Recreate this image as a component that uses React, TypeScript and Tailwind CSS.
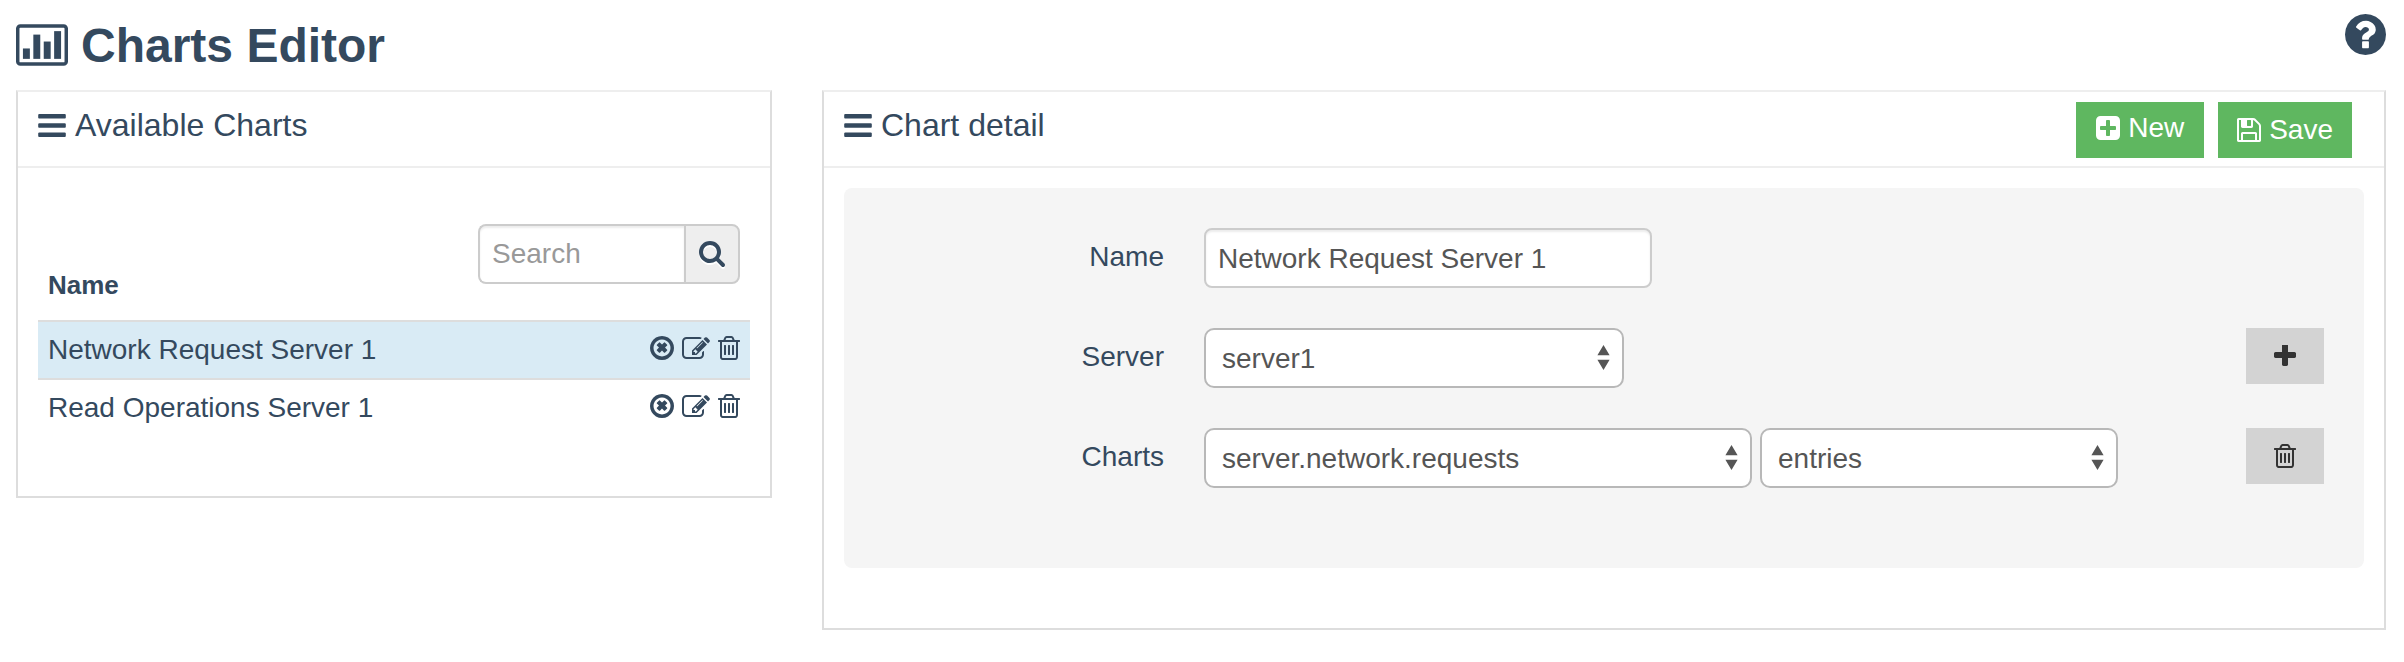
import React, { useId, useState } from "react";

type GlyphProps = { viewBox: string; d: string; className: string };

function Glyph({ viewBox, d, className }: GlyphProps) {
  return (
    <svg viewBox={viewBox} className={className} fill="currentColor" aria-hidden="true">
      <path d={d} />
    </svg>
  );
}

const SQUARE = "128 128 1536 1536";
const DISC =
  "q0 209-103 385.5t-279.5 279.5-385.5 103-385.5-103-279.5-279.5-103-385.5 103-385.5 279.5-279.5 385.5-103 385.5 103 279.5 279.5 103 385.5z";

const paths = {
  remove:
    "M1225 1051l-146 146q-10 10-23 10t-23-10l-137-137-137 137q-10 10-23 10t-23-10l-146-146q-10-10-10-23t10-23l137-137-137-137q-10-10-10-23t10-23l146-146q10-10 23-10t23 10l137 137 137-137q10-10 23-10t23 10l146 146q10 10 10 23t-10 23l-137 137 137 137q10 10 10 23t-10 23zm215-155q0-148-73-273t-198-198-273-73-273 73-198 198-73 273 73 273 198 198 273 73 273-73 198-198 73-273zm224 0" +
    DISC,
  edit: "M888 1184l116-116-152-152-116 116v56h96v96h56zm440-720q-16-16-33 1l-350 350q-17 17-1 33t33-1l350-350q17-17 1-33zm80 594v190q0 119-84.5 203.5t-203.5 84.5h-832q-119 0-203.5-84.5t-84.5-203.5v-832q0-119 84.5-203.5t203.5-84.5h832q63 0 117 25 15 7 18 23 3 17-9 29l-49 49q-14 14-32 8-23-6-45-6h-832q-66 0-113 47t-47 113v832q0 66 47 113t113 47h832q66 0 113-47t47-113v-126q0-13 9-22l64-64q15-15 35-7t20 29zm-96-738l288 288-672 672h-288v-288zm444 132l-92 92-288-288 92-92q28-28 68-28t68 28l152 152q28 28 28 68t-28 68z",
  trash:
    "M704 736v576q0 14-9 23t-23 9h-64q-14 0-23-9t-9-23v-576q0-14 9-23t23-9h64q14 0 23 9t9 23zm256 0v576q0 14-9 23t-23 9h-64q-14 0-23-9t-9-23v-576q0-14 9-23t23-9h64q14 0 23 9t9 23zm256 0v576q0 14-9 23t-23 9h-64q-14 0-23-9t-9-23v-576q0-14 9-23t23-9h64q14 0 23 9t9 23zm128 724v-948h-896v948q0 22 7 40.5t14.5 27 10.5 8.5h832q3 0 10.5-8.5t14.5-27 7-40.5zm-672-1076h448l-48-117q-7-9-17-11h-317q-10 2-17 11zm928 32v64q0 14-9 23t-23 9h-96v948q0 83-47 143.5t-113 60.5h-832q-66 0-113-58.5t-47-141.5v-952h-96q-14 0-23-9t-9-23v-64q0-14 9-23t23-9h309l70-167q15-37 54-63t79-26h320q40 0 79 26t54 63l70 167h309q14 0 23 9t9 23z",
  search:
    "M1216 832q0-185-131.5-316.5t-316.5-131.5-316.5 131.5-131.5 316.5 131.5 316.5 316.5 131.5 316.5-131.5 131.5-316.5zm512 832q0 52-38 90t-90 38q-54 0-90-38l-343-342q-179 124-399 124-143 0-273.5-55.5t-225-150-150-225-55.5-273.5 55.5-273.5 150-225 225-150 273.5-55.5 273.5 55.5 225 150 150 225 55.5 273.5q0 220-124 399l343 343q37 37 37 90z",
  help:
    "M1024 1376v-192q0-14-9-23t-23-9h-192q-14 0-23 9t-9 23v192q0 14 9 23t23 9h192q14 0 23-9t9-23zm256-672q0-88-55.5-163t-138.5-116-170-41q-243 0-371 213-15 24 8 42l132 100q7 6 19 6 16 0 25-12 53-68 86-92 34-24 86-24 48 0 85.5 26t37.5 59q0 38-20 61t-68 45q-63 28-115.5 86.5t-52.5 125.5v36q0 14 9 23t23 9h192q14 0 23-9t9-23q0-19 21.5-49.5t54.5-49.5q32-18 49-28.5t46-35 44.5-48 28-60.5 12.5-81zm384 192" +
    DISC,
  save: "M512 1536h768v-384h-768v384zm896 0h128v-896q0-14-10-38.5t-20-34.5l-281-281q-10-10-34-20t-39-10v416q0 40-28 68t-68 28h-576q-40 0-68-28t-28-68v-416h-128v1280h128v-416q0-40 28-68t68-28h832q40 0 68 28t28 68v416zm-384-928v-320q0-13-9.5-22.5t-22.5-9.5h-192q-13 0-22.5 9.5t-9.5 22.5v320q0 13 9.5 22.5t22.5 9.5h192q13 0 22.5-9.5t9.5-22.5zm640 32v928q0 40-28 68t-68 28h-1344q-40 0-68-28t-28-68v-1344q0-40 28-68t68-28h928q40 0 88 20t76 48l280 280q28 28 48 76t20 88z",
  plusSquare:
    "M1408 960v-128q0-26-19-45t-45-19h-320v-320q0-26-19-45t-45-19h-128q-26 0-45 19t-19 45v320h-320q-26 0-45 19t-19 45v128q0 26 19 45t45 19h320v320q0 26 19 45t45 19h128q26 0 45-19t19-45v-320h320q26 0 45-19t19-45zm256-544v960q0 119-84.5 203.5t-203.5 84.5h-960q-119 0-203.5-84.5t-84.5-203.5v-960q0-119 84.5-203.5t203.5-84.5h960q119 0 203.5 84.5t84.5 203.5z",
  plus: "M1600 736v192q0 40-28 68t-68 28h-416v416q0 40-28 68t-68 28h-192q-40 0-68-28t-28-68v-416h-416q-40 0-68-28t-28-68v-192q0-40 28-68t68-28h416v-416q0-40 28-68t68-28h192q40 0 68 28t28 68v416h416q40 0 68 28t28 68z",
  bars: "M1664 1344v128q0 26-19 45t-45 19h-1408q-26 0-45-19t-19-45v-128q0-26 19-45t45-19h1408q26 0 45 19t19 45zm0-512v128q0 26-19 45t-45 19h-1408q-26 0-45-19t-19-45v-128q0-26 19-45t45-19h1408q26 0 45 19t19 45zm0-512v128q0 26-19 45t-45 19h-1408q-26 0-45-19t-19-45v-128q0-26 19-45t45-19h1408q26 0 45 19t19 45z",
};

function ChartIcon() {
  return (
    <svg viewBox="0 0 1920 1536" className="h-[42px] w-[52px] shrink-0" fill="currentColor" aria-hidden="true">
      <rect x="64" y="64" width="1792" height="1408" rx="96" fill="none" stroke="currentColor" strokeWidth="128" />
      <rect x="256" y="896" width="256" height="384" />
      <rect x="640" y="384" width="256" height="896" />
      <rect x="1024" y="640" width="256" height="640" />
      <rect x="1408" y="256" width="256" height="1024" />
    </svg>
  );
}

function TrashIcon() {
  return <Glyph viewBox="192 128 1408 1536" d={paths.trash} className="h-6 w-[22px]" />;
}

function Panel({ title, actions, children }: { title: string; actions?: React.ReactNode; children: React.ReactNode }) {
  return (
    <section className="min-w-0 border-2 border-[#dddddd] border-t-[#eeeeee] bg-white">
      <header className="flex items-start justify-between border-b-2 border-[#eeeeee] pr-8 pb-2 pl-5">
        <h2 className="flex items-center gap-[9px] text-[32px] leading-[66px]">
          <Glyph viewBox="128 256 1536 1280" d={paths.bars} className="h-[23px] w-7" />
          {title}
        </h2>
        {actions}
      </header>
      {children}
    </section>
  );
}

function ChartTable() {
  const charts = ["Network Request Server 1", "Read Operations Server 1"];
  const [selected, setSelected] = useState(charts[0]);
  return (
    <table className="w-full border-separate border-spacing-0 text-left">
      <thead>
        <tr>
          <th scope="col" className="pb-4 pl-2.5 align-bottom text-[26px] leading-[37px] font-bold">
            Name
          </th>
          <th className="pr-2.5 pb-9 font-normal">
            <div className="flex justify-end">
              <input
                type="search"
                aria-label="Search"
                placeholder="Search"
                className="h-[60px] w-[206px] appearance-none rounded-l-lg border-2 border-r-0 border-[#cccccc] bg-white px-3 text-[28px] text-[#555555] shadow-[inset_0_2px_2px_rgba(0,0,0,0.075)] placeholder:text-[#999999]"
              />
              <button
                type="button"
                aria-label="Run search"
                className="flex h-[60px] w-14 items-center justify-center rounded-r-lg border-2 border-[#cccccc] bg-[#eeeeee]"
              >
                <Glyph
                  viewBox="64 128 1664 1664"
                  d={paths.search}
                  className="size-[26px] drop-shadow-[0_2px_0_#ffffff]"
                />
              </button>
            </div>
          </th>
        </tr>
      </thead>
      <tbody>
        {charts.map((name) => (
          <tr
            key={name}
            onClick={() => setSelected(name)}
            className={name === selected ? "bg-[#d9ebf5]" : "bg-white"}
          >
            <td className="border-t-2 border-[#dddddd] pt-2 pb-2 pl-2.5 text-[28px] leading-10">{name}</td>
            <td className="border-t-2 border-[#dddddd] pt-1.5 pr-2.5 pb-2.5">
              <div className="flex h-10 items-center justify-end gap-2">
                <button type="button" aria-label={`Close ${name}`}>
                  <Glyph viewBox={SQUARE} d={paths.remove} className="size-6" />
                </button>
                <button type="button" aria-label={`Edit ${name}`} className="h-6">
                  <Glyph viewBox="0 128 1792 1408" d={paths.edit} className="h-[22px] w-7" />
                </button>
                <button type="button" aria-label={`Delete ${name}`}>
                  <TrashIcon />
                </button>
              </div>
            </td>
          </tr>
        ))}
      </tbody>
    </table>
  );
}

function Select({ id, label, options, className }: { id?: string; label?: string; options: string[]; className: string }) {
  return (
    <div className={`relative ${className}`}>
      <select
        id={id}
        aria-label={label}
        className="h-[60px] w-full appearance-none rounded-[10px] border-2 border-[#b8b8b8] bg-white pt-0.5 pr-10 pl-4 text-[28px] text-[#555555]"
      >
        {options.map((option) => (
          <option key={option}>{option}</option>
        ))}
      </select>
      <svg
        viewBox="0 0 13 25"
        className="pointer-events-none absolute top-[17px] right-3.5 h-[25px] w-[13px] fill-[#555555]"
        aria-hidden="true"
      >
        <path d="M6.500 0L12.600 10.300H.400zM6.500 25L.400 14.800H12.600z" />
      </svg>
    </div>
  );
}

function FormRow({ id, label, children, action }: { id: string; label: string; children: React.ReactNode; action?: React.ReactNode }) {
  return (
    <div className="grid grid-cols-[320fr_1002fr_78px] gap-10">
      <label htmlFor={id} className="text-right text-[28px] leading-[58px]">
        {label}
      </label>
      <div className="flex gap-2">{children}</div>
      {action}
    </div>
  );
}

const greyButton = "flex h-14 items-center justify-center bg-[#d3d3d3] text-[#333333]";

export default function App() {
  const id = useId();
  return (
    <main
      className="min-h-screen bg-white pr-[18px] pb-8 pl-4 text-[#34495e]"
      style={{ fontFamily: '"Liberation Sans", Helvetica, Arial, sans-serif' }}
    >
      <header className="flex items-start justify-between py-2.5">
        <h1 className="flex gap-[13px] text-[48px] leading-[70px] font-bold">
          <span className="pt-3.5">
            <ChartIcon />
          </span>
          <span className="-mb-0.5 leading-[72px]">Charts Editor</span>
        </h1>
        <button type="button" aria-label="Help" className="mt-1">
          <Glyph viewBox={SQUARE} d={paths.help} className="size-[41px]" />
        </button>
      </header>

      <div className="grid grid-cols-[756fr_1564fr] items-start gap-[50px]">
        <Panel title="Available Charts">
          <div className="px-5 pt-14 pb-[60px]">
            <ChartTable />
          </div>
        </Panel>

        <Panel
          title="Chart detail"
          actions={
            <div className="mt-2.5 flex gap-3.5 text-[28px] text-white">
              <button type="button" className="flex h-14 items-center gap-2 bg-[#5fb760] px-5 pb-1">
                <Glyph viewBox={SQUARE} d={paths.plusSquare} className="size-6" />
                New
              </button>
              <button type="button" className="flex h-14 items-center gap-2 bg-[#5fb760] px-[19px]">
                <Glyph viewBox={SQUARE} d={paths.save} className="size-6" />
                Save
              </button>
            </div>
          }
        >
          <div className="px-5 pt-5 pb-[60px]">
            <form
              className="flex flex-col gap-10 rounded-lg bg-[#f5f5f5] pt-10 pr-10 pb-20"
              onSubmit={(event) => event.preventDefault()}
            >
              <FormRow id={`${id}-name`} label="Name">
                <input
                  id={`${id}-name`}
                  type="text"
                  defaultValue="Network Request Server 1"
                  className="h-[60px] w-[448px] max-w-full rounded-lg border-2 border-[#cccccc] bg-white px-3 pt-0.5 text-[28px] text-[#555555] shadow-[inset_0_2px_2px_rgba(0,0,0,0.075)]"
                />
              </FormRow>
              <FormRow
                id={`${id}-server`}
                label="Server"
                action={
                  <button type="button" aria-label="Add chart" className={greyButton}>
                    <Glyph viewBox="192 192 1408 1408" d={paths.plus} className="size-[22px]" />
                  </button>
                }
              >
                <Select id={`${id}-server`} options={["server1"]} className="w-[420px]" />
              </FormRow>
              <FormRow
                id={`${id}-charts`}
                label="Charts"
                action={
                  <button type="button" aria-label="Remove chart" className={greyButton}>
                    <TrashIcon />
                  </button>
                }
              >
                <Select id={`${id}-charts`} options={["server.network.requests"]} className="w-[548px]" />
                <Select label="Metric" options={["entries"]} className="w-[358px]" />
              </FormRow>
            </form>
          </div>
        </Panel>
      </div>
    </main>
  );
}
